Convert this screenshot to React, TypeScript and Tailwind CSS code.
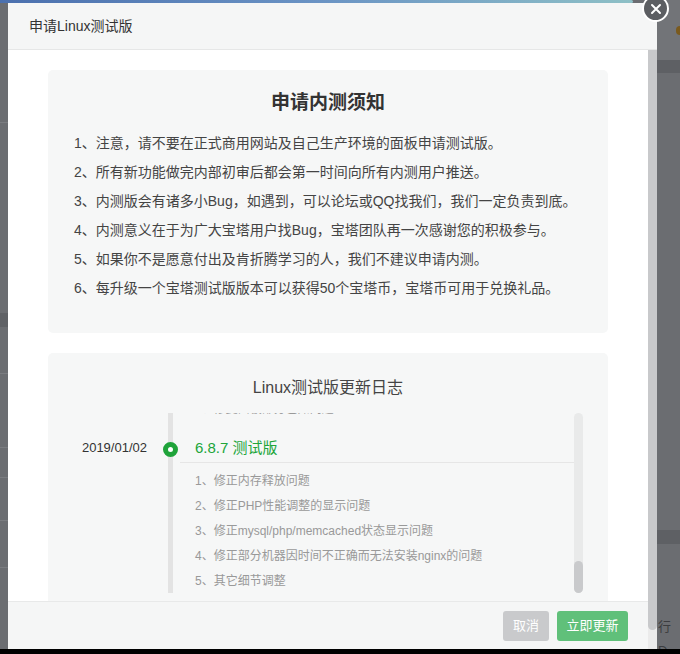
const font = { fontFamily: '"Liberation Sans", "Noto Sans CJK SC", sans-serif' };

const notices = [
  '1、注意，请不要在正式商用网站及自己生产环境的面板申请测试版。',
  '2、所有新功能做完内部初审后都会第一时间向所有内测用户推送。',
  '3、内测版会有诸多小Bug，如遇到，可以论坛或QQ找我们，我们一定负责到底。',
  '4、内测意义在于为广大宝塔用户找Bug，宝塔团队再一次感谢您的积极参与。',
  '5、如果你不是愿意付出及肯折腾学习的人，我们不建议申请内测。',
  '6、每升级一个宝塔测试版版本可以获得50个宝塔币，宝塔币可用于兑换礼品。',
];

const logs = [
  {
    date: '2018/12/25',
    version: '6.8.6 测试版',
    items: [
      '1、修正计划任务执行日志问题',
      '2、修正网站日志切割问题',
      '3、优化文件管理器的显示',
      '4、修正部分面板设置保存失败的问题',
      '5、修复面板部分已知问题',
    ],
  },
  {
    date: '2019/01/02',
    version: '6.8.7 测试版',
    items: [
      '1、修正内存释放问题',
      '2、修正PHP性能调整的显示问题',
      '3、修正mysql/php/memcached状态显示问题',
      '4、修正部分机器因时间不正确而无法安装nginx的问题',
      '5、其它细节调整',
    ],
  },
];

export default function App() {
  return (
    <div className="relative w-[680px] h-[654px] overflow-hidden bg-[#6b6d71] flex flex-col" style={font}>
      {/* page behind the overlay */}
      <div className="absolute left-0 top-0 h-[3px] w-[633px] rounded-r-full bg-gradient-to-r from-[#4b70ae] via-[#6a93c4] to-[#8ec0c6]" />
      <div className="absolute left-0 top-[122px] w-[8px] h-px bg-[#7a7c80]" />
      <div className="absolute left-0 top-[313px] w-[8px] h-[14px] bg-[#5f6165]" />
      <div className="absolute left-0 top-[373px] w-[8px] h-px bg-[#7a7c80]" />
      <div className="absolute left-0 top-[447px] w-[8px] h-px bg-[#7a7c80]" />
      <div className="absolute left-0 top-[477px] w-[8px] h-px bg-[#7a7c80]" />
      <div className="absolute left-0 top-[520px] w-[8px] h-px bg-[#7a7c80]" />
      <div className="absolute left-0 top-[567px] w-[8px] h-px bg-[#7a7c80]" />
      <div className="absolute right-0 top-0 w-[23px] h-[60px] bg-[#727478]" />
      <div className="absolute right-0 top-[60px] w-[23px] h-[13px] bg-[#5e6064]" />
      <div className="absolute right-0 top-[530px] w-[23px] h-[14px] bg-[#5e6064]" />
      <div className="absolute right-[-4px] top-[26px] w-[8px] h-[9px] rounded-full bg-[#7a5a1e]" />
      <div className="absolute left-[658px] top-[617px] text-[13px] text-[#3c3d40]">行</div>
      <div className="absolute left-[658px] top-[641px] text-[13px] text-[#3c3d40]">D</div>

      {/* modal */}
      <div className="relative ml-[8px] mt-[3px] w-[649px] h-[646px] bg-white flex flex-col">
        <div className="h-[47px] shrink-0 bg-[#f5f6f6] border-b border-[#e6e7e7] flex items-center pl-[21px] text-[14px] text-[#333]">
          申请Linux测试版
        </div>
        <div className="flex flex-1 min-h-0">
          <div className="flex-1 flex flex-col min-w-0">
            <div className="flex-1 overflow-hidden px-10 pt-5">
              <div className="rounded-[5px] bg-[#f6f7f7] pt-5 pb-[30px] px-[26px]">
                <div className="text-center text-[19px] leading-[26px] font-bold text-[#333]">申请内测须知</div>
                <div className="mt-[13px] text-[14px] leading-[29px] text-[#444]">
                  {notices.map((n) => (
                    <div key={n} className="whitespace-nowrap">{n}</div>
                  ))}
                </div>
              </div>

              <div className="mt-5 rounded-[5px] bg-[#f6f7f7] pt-[22px] pb-5">
                <div className="text-center text-[16px] leading-[26px] text-[#444]">Linux测试版更新日志</div>
                <div className="mt-3 mx-[25px] h-[180px] flex">
                  <div className="flex-1 overflow-hidden">
                    <div className="-mt-[151px]">
                      {logs.map((log) => (
                        <LogEntry key={log.version} {...log} />
                      ))}
                    </div>
                  </div>
                  <div className="w-[9px] h-full rounded-full bg-[#e9eaea] flex flex-col justify-end">
                    <div className="h-[32px] rounded-full bg-[#c9cacc]" />
                  </div>
                </div>
              </div>
            </div>
            <div className="h-[48px] shrink-0 bg-[#f5f6f6] border-t border-[#e8e9e9] flex items-center justify-end gap-2 pr-5">
              <button className="h-[30px] w-[46px] rounded-[3px] bg-[#c9cacc] text-[13px] text-white">取消</button>
              <button className="h-[30px] w-[71px] rounded-[3px] bg-[#60c07a] text-[13px] text-white">立即更新</button>
            </div>
          </div>
          <div className="w-[9px] shrink-0 bg-[#ebebeb] flex flex-col">
            <div className="h-[580px] rounded-b-full bg-[#c8c9cb]" />
          </div>
        </div>
      </div>

      {/* close button */}
      <div className="absolute left-[642px] top-[-5px] w-[27px] h-[27px] rounded-full bg-[#5c5e62] border-2 border-white flex items-center justify-center">
        <svg width="12" height="12" viewBox="0 0 12 12" fill="none" stroke="white" strokeWidth={2} strokeLinecap="round">
          <path d="M2 2l8 8M10 2l-8 8" />
        </svg>
      </div>

      <div className="absolute left-0 bottom-0 w-full h-[5px] bg-black" />
    </div>
  );
}

function LogEntry({ date, version, items }: { date: string; version: string; items: string[] }) {
  return (
    <div className="flex">
      <div className="w-[95px] shrink-0 pr-[21px] text-right text-[13px] leading-[28px] text-[#333]">{date}</div>
      <div className="relative flex-1 border-l-[5px] border-[#e3e3e3] pb-3">
        <div className="absolute -left-[10.5px] top-[7.5px] w-[15px] h-[15px] rounded-full border-[5px] border-[#1fa33a] bg-white" />
        <div className="ml-[7px] border-b border-[#e6e6e6] pl-[15px] h-[29px] text-[15px] leading-[28px] text-[#20a53a]">
          {version}
        </div>
        <div className="ml-[7px] pl-[15px] pt-[6px] text-[12px] leading-[25px] text-[#999]">
          {items.map((i) => (
            <div key={i} className="whitespace-nowrap">{i}</div>
          ))}
        </div>
      </div>
    </div>
  );
}
